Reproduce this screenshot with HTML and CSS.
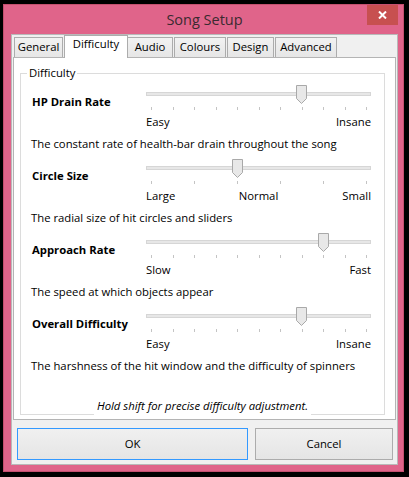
FILE: index.html
```html
<!DOCTYPE html>
<html>
<head>
<meta charset="utf-8">
<title>Song Setup</title>
<link rel="stylesheet" href="styles.css">
</head>
<body>
<div class="window">
  <div class="titlebar">
    <span></span>
    <div class="title">Song Setup</div>
    <div class="close">
      <svg width="9" height="8" viewBox="0 0 9 8"><path d="M1 0.5 L8 7.5 M8 0.5 L1 7.5" stroke="#fff" stroke-width="2" fill="none"/></svg>
    </div>
  </div>
  <div class="client">
    <div class="tabs">
      <div class="tab w-general">General</div>
      <div class="tab active w-diff">Difficulty</div>
      <div class="tab w-audio">Audio</div>
      <div class="tab w-colours">Colours</div>
      <div class="tab w-design">Design</div>
      <div class="tab w-adv">Advanced</div>
    </div>
    <div class="panel">
      <fieldset class="group">
        <legend>Difficulty</legend>

        <div class="setting">
          <div class="name">HP Drain Rate</div>
          <div class="slider">
            <div class="track"></div>
            <div class="ticks"><i></i><i></i><i></i><i></i><i></i><i></i><i></i><i></i><i></i><i></i><i></i></div>
            <svg class="thumb" style="left:150px" width="11" height="19" viewBox="0 0 11 19"><path d="M0.5 0.5 H10.5 V13.5 L5.5 18.5 L0.5 13.5 Z" fill="#e8e8e8" stroke="#a9a9a9"/></svg>
          </div>
          <div class="range"><span>Easy</span><span></span><span>Insane</span></div>
          <div class="desc">The constant rate of health-bar drain throughout the song</div>
        </div>

        <div class="setting">
          <div class="name">Circle Size</div>
          <div class="slider">
            <div class="track"></div>
            <div class="ticks"><i></i><i></i><i></i><i></i><i></i><i></i></div>
            <svg class="thumb" style="left:86px" width="11" height="19" viewBox="0 0 11 19"><path d="M0.5 0.5 H10.5 V13.5 L5.5 18.5 L0.5 13.5 Z" fill="#e8e8e8" stroke="#a9a9a9"/></svg>
          </div>
          <div class="range"><span>Large</span><span>Normal</span><span>Small</span></div>
          <div class="desc">The radial size of hit circles and sliders</div>
        </div>

        <div class="setting">
          <div class="name">Approach Rate</div>
          <div class="slider">
            <div class="track"></div>
            <div class="ticks"><i></i><i></i><i></i><i></i><i></i><i></i><i></i><i></i><i></i><i></i><i></i></div>
            <svg class="thumb" style="left:172px" width="11" height="19" viewBox="0 0 11 19"><path d="M0.5 0.5 H10.5 V13.5 L5.5 18.5 L0.5 13.5 Z" fill="#e8e8e8" stroke="#a9a9a9"/></svg>
          </div>
          <div class="range"><span>Slow</span><span></span><span>Fast</span></div>
          <div class="desc">The speed at which objects appear</div>
        </div>

        <div class="setting">
          <div class="name">Overall Difficulty</div>
          <div class="slider">
            <div class="track"></div>
            <div class="ticks"><i></i><i></i><i></i><i></i><i></i><i></i><i></i><i></i><i></i><i></i><i></i></div>
            <svg class="thumb" style="left:150px" width="11" height="19" viewBox="0 0 11 19"><path d="M0.5 0.5 H10.5 V13.5 L5.5 18.5 L0.5 13.5 Z" fill="#e8e8e8" stroke="#a9a9a9"/></svg>
          </div>
          <div class="range"><span>Easy</span><span></span><span>Insane</span></div>
          <div class="desc">The harshness of the hit window and the difficulty of spinners</div>
        </div>

        <div class="hint">Hold shift for precise difficulty adjustment.</div>
      </fieldset>
    </div>
    <div class="buttons">
      <button class="btn default">OK</button>
      <button class="btn">Cancel</button>
    </div>
  </div>
</div>
</body>
</html>
```

FILE: styles.css
```css
* { box-sizing: border-box; }
html, body {
  margin: 0;
  padding: 0;
  background: #000;
  width: 409px;
  height: 477px;
  overflow: hidden;
}
body {
  font-family: "Open Sans", "Noto Sans", sans-serif;
  font-size: 11.3px;
  line-height: 16px;
  color: #000;
}
.window {
  margin: 4px 0 0 3px;
  width: 401px;
  height: 468px;
  border: 1px solid #c4506f;
  background: #e0648a;
  padding: 0 5px 6px 7px;
  display: flex;
  flex-direction: column;
}
.titlebar {
  height: 29px;
  display: grid;
  grid-template-columns: 1fr auto 1fr;
  align-items: center;
}
.title {
  font-size: 14.5px;
  color: #3a2a30;
  padding-top: 1px;
}
.close {
  justify-self: end;
  align-self: start;
  width: 31px;
  height: 20px;
  background: #c75050;
  display: flex;
  align-items: center;
  justify-content: center;
}
.client {
  flex: 1;
  border: 1px solid #b9b9b9;
  background: #f0f0f0;
  display: flex;
  flex-direction: column;
}
.tabs {
  height: 22px;
  display: flex;
  align-items: flex-end;
  padding-left: 2px;
  position: relative;
  z-index: 1;
}
.tab {
  height: 20px;
  border: 1px solid #acacac;
  border-bottom: none;
  background: linear-gradient(#f2f2f2, #e6e6e6);
  text-align: center;
  line-height: 18px;
  margin-right: 1px;
  white-space: nowrap;
}
.tab.active {
  height: 23px;
  margin-bottom: -1px;
  background: #fff;
  line-height: 16px;
  margin-right: -1px;
}
.w-general { width: 49px; }
.w-diff { width: 64px; }
.w-audio { width: 46px; }
.w-colours { width: 52px; }
.w-design { width: 47px; }
.w-adv { width: 62px; }

.panel {
  margin: 0 1px;
  height: 363px;
  border: 1px solid #b4b4b4;
  background: #fff;
  padding: 7px 10px 0 6px;
}
.group {
  margin: 0;
  border: 1px solid #dcdcdc;
  padding: 3px 0 0 0;
  min-width: 0;
}
.group legend {
  margin-left: 6px;
  padding: 0 2px;
  line-height: 16px;
}
.setting {
  display: grid;
  grid-template-columns: 114px 225px;
  padding-left: 11px;
  margin-bottom: 6px;
}
.name {
  font-weight: bold;
  align-self: end;
  white-space: nowrap;
}
.slider {
  position: relative;
  height: 26px;
}
.track {
  position: absolute;
  left: 0;
  right: 0;
  top: 8px;
  height: 4px;
  background: #e7e7e7;
  border: 1px solid #d6d6d6;
}
.ticks {
  position: absolute;
  left: 5px;
  right: 4px;
  top: 23px;
  height: 3px;
  display: flex;
  justify-content: space-between;
}
.ticks i {
  display: block;
  width: 1px;
  height: 3px;
  background: #c4c4c4;
}
.thumb {
  position: absolute;
  top: 1px;
  display: block;
}
.range {
  grid-column: 2;
  margin-top: 4px;
  display: grid;
  grid-template-columns: 1fr auto 1fr;
}
.range span:first-child { justify-self: start; }
.range span:last-child { justify-self: end; }
.desc {
  grid-column: 1 / 3;
  margin-top: 6px;
  margin-left: -1px;
  white-space: nowrap;
}
.hint {
  width: fit-content;
  margin: 24px auto -1px;
  padding: 0 3px;
  height: 17px;
  background: #fff;
  font-style: italic;
  position: relative;
}
.buttons {
  display: flex;
  gap: 7px;
  margin: 8px 0 0 5px;
}
.btn {
  font: inherit;
  color: #000;
  height: 32px;
  border: 1px solid #acacac;
  background: linear-gradient(#f0f0f0, #e5e5e5);
  padding: 0;
  border-radius: 0;
}
.btn.default {
  width: 231px;
  border-color: #3399ff;
}
.btn:not(.default) { width: 138px; }
```
